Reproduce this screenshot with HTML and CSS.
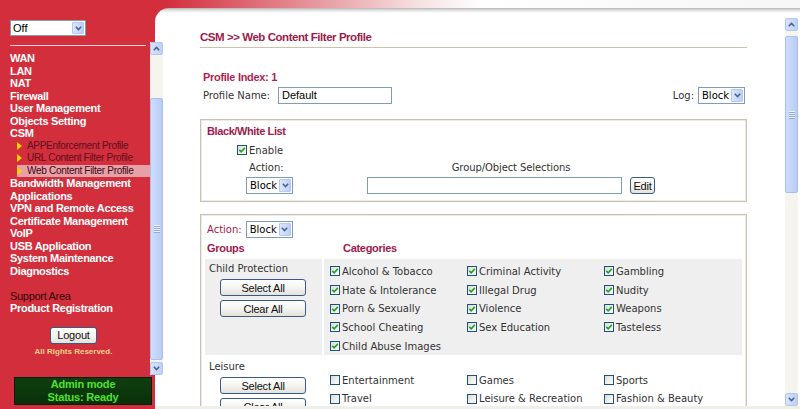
FILE: index.html
```html
<!DOCTYPE html>
<html>
<head>
<meta charset="utf-8">
<title>CSM Web Content Filter Profile</title>
<link rel="stylesheet" href="styles.css">
</head>
<body>
<div class="app">
  <div class="topstrip"></div>
  <div class="layout">
    <aside class="sidebar">
      <div class="sel sel-off"><span class="sel-txt">Off</span><span class="sel-arrow"><svg width="7" height="5" viewBox="0 0 7 5"><path d="M0.8 0.8 L3.5 3.6 L6.2 0.8" stroke="#4d6185" stroke-width="1.5" fill="none"/></svg></span></div>
      <div class="side-frame">
        <div class="menu">
          <div class="side-rule"></div>
          <div class="menu-list">
            <a class="mi">WAN</a>
            <a class="mi">LAN</a>
            <a class="mi">NAT</a>
            <a class="mi">Firewall</a>
            <a class="mi">User Management</a>
            <a class="mi">Objects Setting</a>
            <a class="mi">CSM</a>
            <a class="si"><i class="tri"></i>APPEnforcement Profile</a>
            <a class="si"><i class="tri"></i>URL Content Filter Profile</a>
            <a class="si active"><i class="tri"></i>Web Content Filter Profile</a>
            <a class="mi">Bandwidth Management</a>
            <a class="mi">Applications</a>
            <a class="mi">VPN and Remote Access</a>
            <a class="mi">Certificate Management</a>
            <a class="mi">VoIP</a>
            <a class="mi">USB Application</a>
            <a class="mi">System Maintenance</a>
            <a class="mi">Diagnostics</a>
            <a class="support">Support Area</a>
            <a class="mi">Product Registration</a>
          </div>
          <div class="logout-wrap"><button class="btn logout">Logout</button></div>
          <div class="rights">All Rights Reserved.</div>
        </div>
        <div class="vscroll side-scroll">
          <div class="sb-btn"><svg width="7" height="5" viewBox="0 0 7 5"><path d="M0.8 4.2 L3.5 1.4 L6.2 4.2" stroke="#4d6185" stroke-width="1.5" fill="none"/></svg></div>
          <div class="sb-track"><div class="sb-thumb"><span class="grip"></span></div></div>
          <div class="sb-btn"><svg width="7" height="5" viewBox="0 0 7 5"><path d="M0.8 0.8 L3.5 3.6 L6.2 0.8" stroke="#4d6185" stroke-width="1.5" fill="none"/></svg></div>
        </div>
      </div>
      <div class="status">Admin mode<br>Status: Ready</div>
    </aside>

    <main class="panel">
      <div class="frame">
        <div class="content">
          <div class="page-title">CSM &gt;&gt; Web Content Filter Profile</div>
          <div class="pidx">Profile Index: 1</div>
          <div class="prow">
            <span class="lbl">Profile Name:</span>
            <div class="input name">Default</div>
            <span class="log-lbl">Log:</span>
            <div class="sel sel-block"><span class="sel-txt">Block</span><span class="sel-arrow"><svg width="7" height="5" viewBox="0 0 7 5"><path d="M0.8 0.8 L3.5 3.6 L6.2 0.8" stroke="#4d6185" stroke-width="1.5" fill="none"/></svg></span></div>
          </div>

          <section class="box bw">
            <div class="box-title">Black/White List</div>
            <div class="enable-row"><span class="cb"><svg width="8" height="8" viewBox="0 0 8 8"><path d="M1.3 3.9 L3.2 5.8 L6.8 1.9" stroke="#22a022" stroke-width="1.6" fill="none"/></svg></span><span>Enable</span></div>
            <div class="bw-grid">
              <div class="bw-act">Action:</div>
              <div class="bw-grp">Group/Object Selections</div>
              <div class="sel sel-block"><span class="sel-txt">Block</span><span class="sel-arrow"><svg width="7" height="5" viewBox="0 0 7 5"><path d="M0.8 0.8 L3.5 3.6 L6.2 0.8" stroke="#4d6185" stroke-width="1.5" fill="none"/></svg></span></div>
              <div class="input objsel"></div>
              <button class="btn edit">Edit</button>
            </div>
          </section>

          <section class="box cat">
            <div class="act-row"><span class="crim">Action:</span><div class="sel sel-block"><span class="sel-txt">Block</span><span class="sel-arrow"><svg width="7" height="5" viewBox="0 0 7 5"><path d="M0.8 0.8 L3.5 3.6 L6.2 0.8" stroke="#4d6185" stroke-width="1.5" fill="none"/></svg></span></div></div>
            <div class="hdr"><span class="h-groups">Groups</span><span class="h-cats">Categories</span></div>

            <div class="grow shaded">
              <div class="gcell">
                <div class="gname">Child Protection</div>
                <button class="btn gbtn sa">Select All</button>
                <button class="btn gbtn ca">Clear All</button>
              </div>
              <div class="ccell">
                <label class="item"><span class="cb"><svg width="8" height="8" viewBox="0 0 8 8"><path d="M1.3 3.9 L3.2 5.8 L6.8 1.9" stroke="#22a022" stroke-width="1.6" fill="none"/></svg></span>Alcohol &amp; Tobacco</label>
                <label class="item"><span class="cb"><svg width="8" height="8" viewBox="0 0 8 8"><path d="M1.3 3.9 L3.2 5.8 L6.8 1.9" stroke="#22a022" stroke-width="1.6" fill="none"/></svg></span>Criminal Activity</label>
                <label class="item"><span class="cb"><svg width="8" height="8" viewBox="0 0 8 8"><path d="M1.3 3.9 L3.2 5.8 L6.8 1.9" stroke="#22a022" stroke-width="1.6" fill="none"/></svg></span>Gambling</label>
                <label class="item"><span class="cb"><svg width="8" height="8" viewBox="0 0 8 8"><path d="M1.3 3.9 L3.2 5.8 L6.8 1.9" stroke="#22a022" stroke-width="1.6" fill="none"/></svg></span>Hate &amp; Intolerance</label>
                <label class="item"><span class="cb"><svg width="8" height="8" viewBox="0 0 8 8"><path d="M1.3 3.9 L3.2 5.8 L6.8 1.9" stroke="#22a022" stroke-width="1.6" fill="none"/></svg></span>Illegal Drug</label>
                <label class="item"><span class="cb"><svg width="8" height="8" viewBox="0 0 8 8"><path d="M1.3 3.9 L3.2 5.8 L6.8 1.9" stroke="#22a022" stroke-width="1.6" fill="none"/></svg></span>Nudity</label>
                <label class="item"><span class="cb"><svg width="8" height="8" viewBox="0 0 8 8"><path d="M1.3 3.9 L3.2 5.8 L6.8 1.9" stroke="#22a022" stroke-width="1.6" fill="none"/></svg></span>Porn &amp; Sexually</label>
                <label class="item"><span class="cb"><svg width="8" height="8" viewBox="0 0 8 8"><path d="M1.3 3.9 L3.2 5.8 L6.8 1.9" stroke="#22a022" stroke-width="1.6" fill="none"/></svg></span>Violence</label>
                <label class="item"><span class="cb"><svg width="8" height="8" viewBox="0 0 8 8"><path d="M1.3 3.9 L3.2 5.8 L6.8 1.9" stroke="#22a022" stroke-width="1.6" fill="none"/></svg></span>Weapons</label>
                <label class="item"><span class="cb"><svg width="8" height="8" viewBox="0 0 8 8"><path d="M1.3 3.9 L3.2 5.8 L6.8 1.9" stroke="#22a022" stroke-width="1.6" fill="none"/></svg></span>School Cheating</label>
                <label class="item"><span class="cb"><svg width="8" height="8" viewBox="0 0 8 8"><path d="M1.3 3.9 L3.2 5.8 L6.8 1.9" stroke="#22a022" stroke-width="1.6" fill="none"/></svg></span>Sex Education</label>
                <label class="item"><span class="cb"><svg width="8" height="8" viewBox="0 0 8 8"><path d="M1.3 3.9 L3.2 5.8 L6.8 1.9" stroke="#22a022" stroke-width="1.6" fill="none"/></svg></span>Tasteless</label>
                <label class="item"><span class="cb"><svg width="8" height="8" viewBox="0 0 8 8"><path d="M1.3 3.9 L3.2 5.8 L6.8 1.9" stroke="#22a022" stroke-width="1.6" fill="none"/></svg></span>Child Abuse Images</label>
              </div>
            </div>

            <div class="grow leisure">
              <div class="gcell">
                <div class="gname">Leisure</div>
                <button class="btn gbtn sa">Select All</button>
                <button class="btn gbtn ca">Clear All</button>
              </div>
              <div class="ccell">
                <label class="item"><span class="cb"></span>Entertainment</label>
                <label class="item"><span class="cb"></span>Games</label>
                <label class="item"><span class="cb"></span>Sports</label>
                <label class="item"><span class="cb"></span>Travel</label>
                <label class="item"><span class="cb"></span>Leisure &amp; Recreation</label>
                <label class="item"><span class="cb"></span>Fashion &amp; Beauty</label>
              </div>
            </div>
          </section>
        </div>
        <div class="vscroll main-scroll">
          <div class="sb-btn"><svg width="7" height="5" viewBox="0 0 7 5"><path d="M0.8 4.2 L3.5 1.4 L6.2 4.2" stroke="#4d6185" stroke-width="1.5" fill="none"/></svg></div>
          <div class="sb-track"><div class="sb-thumb"><span class="grip"></span></div></div>
          <div class="sb-btn"><svg width="7" height="5" viewBox="0 0 7 5"><path d="M0.8 0.8 L3.5 3.6 L6.2 0.8" stroke="#4d6185" stroke-width="1.5" fill="none"/></svg></div>
        </div>
      </div>
    </main>
  </div>
</div>
</body>
</html>
```
FILE: styles.css
```css
* { box-sizing: border-box; margin: 0; padding: 0; }
html, body { width: 800px; height: 409px; overflow: hidden; }
body {
  background: #d22e3c;
  font-family: "DejaVu Sans", sans-serif;
  font-size: 10px;
  letter-spacing: 0;
  color: #333;
}
.app { display: flex; flex-direction: column; height: 409px; }
.topstrip {
  height: 8px; flex: none;
  background: linear-gradient(90deg, #d22e3c 0, #d22e3c 165px, #e48c94 300px, #f7e2e3 420px, #ffffff 480px, #f6f6f6 100%);
}
.layout { flex: 1; display: flex; min-height: 0; }

/* ---------- sidebar ---------- */
.sidebar { width: 155px; flex: none; padding-top: 12px; display: flex; flex-direction: column; }
.side-frame { margin-top: 6px; width: 163px; height: 333px; display: flex; position: relative; z-index: 1; flex: none; }
.menu { width: 150px; flex: none; font-family: "Liberation Sans", Arial, sans-serif; }
.side-rule { margin: 3px 0 0 10px; width: 136px; height: 1px; background: #f1d3d5; }
.menu-list { margin-top: 6px; font-size: 11px; line-height: 12.5px; letter-spacing: -0.3px; }
.mi { display: block; height: 12.5px; padding-left: 10px; color: #fff; font-weight: bold; white-space: nowrap; }
.si {
  display: flex; align-items: center; height: 12.5px; margin-left: 17px;
  font-size: 10px; color: #5c0e1d; white-space: nowrap;
}
.si.active { background: #e8a0a7; color: #3a0c15; }
.tri {
  width: 0; height: 0; flex: none; margin-right: 5px;
  border-left: 5px solid #ffd200; border-top: 4px solid transparent; border-bottom: 4px solid transparent;
}
.support { display: block; margin-top: 12.5px; padding-left: 10px; height: 12.5px; color: #2e0a0a; }
.logout-wrap { margin-top: 12px; padding-left: 50px; }
.rights {
  margin-top: 3px; width: 147px; text-align: center;
  font: bold 8px/10px "Liberation Sans", Arial, sans-serif; color: #f6d38c; letter-spacing: 0;
}
.status {
  margin: 2px 0 0 14px; width: 138px; height: 28px; flex: none;
  background: linear-gradient(#0f3e0f, #0a300a);
  border: 1px solid #062006;
  color: #4ee22c; text-align: center;
  font: bold 11px/13px "Liberation Sans", Arial, sans-serif; letter-spacing: -0.2px;
}

/* ---------- selects / inputs / buttons ---------- */
.sel { display: flex; border: 1px solid #7f9db9; background: #fff; height: 17px; flex: none; }
.sel-txt { flex: 1; padding-left: 3px; line-height: 15px; color: #000; white-space: nowrap; overflow: hidden; }
.sel-arrow {
  width: 12px; margin: 1px 1px 1px 0; flex: none;
  background: linear-gradient(90deg, #dbe6fd, #bccff8);
  border: 1px solid #b4c8f0; border-radius: 1px;
  display: flex; align-items: center; justify-content: center;
}
.sel-off { margin-left: 10px; width: 76px; height: 16px; }
.sel-off .sel-txt { font: 11px/14px "Liberation Sans", Arial, sans-serif; padding-left: 2px; }
.sel-block { width: 47px; }

.input {
  border: 1px solid #7f9db9; background: #fff; height: 17px;
  font: 11px/15px "Liberation Sans", Arial, sans-serif; color: #000; padding-left: 3px; letter-spacing: 0;
}
.btn {
  display: flex; align-items: center; justify-content: center;
  height: 17px;
  font: 11px "Liberation Sans", Arial, sans-serif; color: #111; letter-spacing: -0.2px;
  border: 1px solid #3b5b86; border-radius: 3px;
  background: linear-gradient(#ffffff, #f3f3ef 55%, #e2e1da);
}
.logout { width: 47px; }
.edit { width: 25px; }

/* ---------- main panel ---------- */
.panel {
  flex: 1; min-width: 0;
  background: linear-gradient(#b4b4b4 0, #dedede 2px, #ffffff 5px);
  border-top-left-radius: 14px;
  border-bottom: 3px solid #efeee8;
  padding: 10px 2px 0 0;
  display: flex; flex-direction: column;
}
.frame { flex: 1; display: flex; min-height: 0; }
.content { flex: 1; padding-left: 45px; overflow: hidden; }

.page-title {
  margin-top: 12px; width: 547px;
  font: bold 11.5px/14px "Liberation Sans", Arial, sans-serif; letter-spacing: -0.45px;
  color: #9e1a4a;
  padding-bottom: 3px; border-bottom: 1px solid #cdc2aa;
}
.pidx {
  margin-top: 23px; padding-left: 3px;
  font: bold 11px/12px "Liberation Sans", Arial, sans-serif; letter-spacing: -0.3px;
  color: #b01f4e;
}
.prow { margin-top: 4px; width: 547px; height: 17px; display: flex; align-items: center; padding: 0 2px 0 3px; }
.prow .lbl { width: 75px; flex: none; }
.input.name { width: 114px; }
.log-lbl { margin-left: auto; margin-right: 4px; }

.box {
  width: 547px; padding: 0 4px;
  border: 1px solid #c8c3b3;
  box-shadow: inset 0 0 0 1px #eceae2;
}
.bw { margin-top: 15px; padding-bottom: 7px; }
.box-title {
  margin-top: 5px; padding-left: 2px;
  font: bold 11px/12px "Liberation Sans", Arial, sans-serif; letter-spacing: -0.4px;
  color: #a01a4b;
}
.enable-row { margin-top: 6px; height: 14px; display: flex; align-items: center; gap: 2px; padding-left: 32px; }
.bw-grid {
  margin: 3px 0 0 41px;
  display: grid; grid-template-columns: 121px 263px 25px; grid-template-rows: 14px 17px; row-gap: 3px;
  align-items: center;
}
.bw-act { padding-left: 3px; }
.bw-grp { grid-column: 2 / 4; text-align: center; letter-spacing: -0.1px; }
.input.objsel { width: 255px; }

.cat { margin-top: 12px; }
.act-row { margin-top: 6px; height: 17px; display: flex; align-items: center; gap: 4px; padding-left: 2px; }
.crim { color: #a01a4b; }
.hdr { margin-top: 3px; height: 14px; display: flex; align-items: center; padding-left: 2px; }
.h-groups, .h-cats { font: bold 11px/14px "Liberation Sans", Arial, sans-serif; letter-spacing: -0.3px; color: #a01a4b; }
.h-groups { width: 136px; }

.grow { display: grid; grid-template-columns: 117px 1fr; column-gap: 2px; margin-top: 2px; }
.grow.shaded { margin-top: 4px; }
.grow.shaded .gcell, .grow.shaded .ccell { background: #efefef; }
.gcell { padding-top: 3px; padding-bottom: 4px; }
.gname { padding-left: 4px; line-height: 14px; }
.gbtn { width: 86px; margin-left: 15px; }
.gbtn.sa { margin-top: 3px; }
.gbtn.ca { margin-top: 4px; }
.ccell {
  padding: 3px 0 0 6px;
  display: grid; grid-template-columns: 137px 137px 1fr; grid-auto-rows: 18.7px; align-items: center;
}
.leisure .ccell { padding-top: 13.5px; }
.item { display: flex; align-items: center; gap: 2px; white-space: nowrap; color: #333; }
.cb {
  width: 10px; height: 10px; flex: none;
  border: 1px solid #1c5180;
  background: linear-gradient(135deg, #dcdcd5, #ffffff);
  display: inline-flex; align-items: center; justify-content: center;
}

/* ---------- scrollbars ---------- */
.vscroll { width: 13px; flex: none; display: flex; flex-direction: column; background: #f5f4ef; }
.sb-btn {
  height: 13px; flex: none;
  display: flex; align-items: center; justify-content: center;
  background: linear-gradient(90deg, #d7e3fc, #bdd0f8);
  border: 1px solid #b3c6ee; border-radius: 2px;
}
.sb-track { flex: 1; display: flex; flex-direction: column; min-height: 0; }
.sb-thumb {
  flex: none;
  background: linear-gradient(90deg, #cfddfc, #b9ccf6);
  border: 1px solid #a9bfec; border-radius: 2px;
  display: flex; align-items: center; justify-content: center;
}
.grip { width: 6px; height: 8px; background: repeating-linear-gradient(#eef3fe 0 1px, #90a9dd 1px 2px); }
.side-scroll .sb-thumb { margin-top: 43px; height: 262px; }
.main-scroll .sb-thumb { margin-top: 5px; height: 157px; }
```
